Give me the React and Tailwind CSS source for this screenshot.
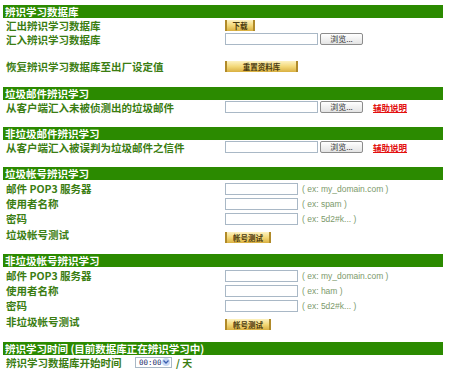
import React from "react";

const FONT = { fontFamily: '"Noto Sans CJK SC", "Liberation Sans", sans-serif' };

function Header({ children, className = "" }) {
  return (
    <div className={"h-[13px] bg-[#2b8a00] text-white text-[10.5px] leading-[13px] font-semibold pl-[2px] whitespace-nowrap overflow-hidden " + className}>
      {children}
    </div>
  );
}

function Row({ label, children, h = "h-[14px]" }) {
  return (
    <div className={"grid grid-cols-[222px_1fr] items-center " + h}>
      <div className="pl-[3px] text-[10.5px] leading-[13px] font-semibold text-[#3b7d12] whitespace-nowrap">{label}</div>
      <div className="flex items-center">{children}</div>
    </div>
  );
}

function GoldBtn({ w, children }) {
  return (
    <div
      className={"h-[11px] flex items-center justify-center border-x-2 border-[#b08a2a] bg-gradient-to-b from-[#fdf2c0] via-[#f3d878] to-[#d9b040] text-[7.5px] leading-[11px] font-bold text-[#4a3a10] " + w}
    >
      {children}
    </div>
  );
}

function Browse() {
  return (
    <div className="ml-[2px] h-[12px] w-[43px] rounded-[2px] border border-[#8c8c8c] bg-gradient-to-b from-[#ffffff] to-[#e4e4e4] text-[8px] leading-[10px] text-[#333] flex items-center justify-center">
      浏览...
    </div>
  );
}

function Input({ w }) {
  return <div className={"h-[12px] border border-[#a9b8c6] bg-white " + w} />;
}

function Help() {
  return (
    <span className="ml-[10px] text-[8.5px] leading-[10px] font-bold text-[#e31010] underline">辅助说明</span>
  );
}

function Hint({ children }) {
  return (
    <span className="ml-[4px] text-[8.5px] leading-[10px] text-[#7d9a6c] whitespace-nowrap" style={{ fontFamily: '"Liberation Sans", "Noto Sans CJK SC", sans-serif' }}>
      {children}
    </span>
  );
}

export default function App() {
  return (
    <div className="w-[450px] h-[369px] bg-white overflow-hidden" style={FONT}>
      <div className="ml-[3px] w-[440px] pt-[5px] flex flex-col">
        <Header>辨识学习数据库</Header>
        <Row label="汇出辨识学习数据库">
          <GoldBtn w="w-[30px]">下载</GoldBtn>
        </Row>
        <Row label="汇入辨识学习数据库">
          <Input w="w-[93px]" />
          <Browse />
        </Row>
        <div className="h-[13px]" />
        <Row label="恢复辨识学习数据库至出厂设定值" h="h-[15px]">
          <GoldBtn w="w-[73px]">重置资料库</GoldBtn>
        </Row>
        <div className="h-[13px]" />

        <Header>垃圾邮件辨识学习</Header>
        <Row label="从客户端汇入未被侦测出的垃圾邮件">
          <Input w="w-[93px]" />
          <Browse />
          <Help />
        </Row>
        <div className="h-[13px]" />

        <Header>非垃圾邮件辨识学习</Header>
        <Row label="从客户端汇入被误判为垃圾邮件之信件">
          <Input w="w-[93px]" />
          <Browse />
          <Help />
        </Row>
        <div className="h-[13px]" />

        <Header>垃圾帐号辨识学习</Header>
        <div className="h-[1px]" />
        <Row label="邮件  POP3 服务器" h="h-[15px]">
          <Input w="w-[73px]" />
          <Hint>( ex: my_domain.com )</Hint>
        </Row>
        <Row label="使用者名称" h="h-[15px]">
          <Input w="w-[73px]" />
          <Hint>( ex: spam )</Hint>
        </Row>
        <Row label="密码" h="h-[15px]">
          <Input w="w-[73px]" />
          <Hint>( ex: 5d2#k... )</Hint>
        </Row>
        <Row label="垃圾帐号测试" h="h-[15px]">
          <div className="pt-[6px]">
            <GoldBtn w="w-[46px]">帐号测试</GoldBtn>
          </div>
        </Row>
        <div className="h-[13px]" />

        <Header>非垃圾帐号辨识学习</Header>
        <div className="h-[1px]" />
        <Row label="邮件  POP3 服务器" h="h-[15px]">
          <Input w="w-[73px]" />
          <Hint>( ex: my_domain.com )</Hint>
        </Row>
        <Row label="使用者名称" h="h-[15px]">
          <Input w="w-[73px]" />
          <Hint>( ex: ham )</Hint>
        </Row>
        <Row label="密码" h="h-[15px]">
          <Input w="w-[73px]" />
          <Hint>( ex: 5d2#k... )</Hint>
        </Row>
        <Row label="非垃圾帐号测试" h="h-[15px]">
          <div className="pt-[6px]">
            <GoldBtn w="w-[46px]">帐号测试</GoldBtn>
          </div>
        </Row>
        <div className="h-[14px]" />

        <Header>辨识学习时间 (目前数据库正在辨识学习中)</Header>
        <div className="h-[14px] flex items-center pl-[3px]">
          <span className="text-[10.5px] leading-[13px] font-semibold text-[#3b7d12] whitespace-nowrap w-[129px]">辨识学习数据库开始时间</span>
          <div className="h-[11px] w-[37px] border border-[#a9b8c6] bg-white flex items-center justify-between pl-[3px] pr-[1px]">
            <span className="text-[7.5px] leading-[9px] text-[#1a2a6a]" style={{ fontFamily: '"DejaVu Sans Mono", monospace' }}>00:00</span>
            <span className="w-[8px] h-[8px] rounded-full bg-[#c8d8f4] flex items-center justify-center">
              <svg width="6" height="4" viewBox="0 0 6 4"><path d="M0.5 0.5 L3 3 L5.5 0.5" fill="none" stroke="#3a5fb0" strokeWidth="1.3" /></svg>
            </span>
          </div>
          <span className="ml-[4px] text-[10px] leading-[13px] font-semibold text-[#3b7d12]">/ 天</span>
        </div>
      </div>
    </div>
  );
}
